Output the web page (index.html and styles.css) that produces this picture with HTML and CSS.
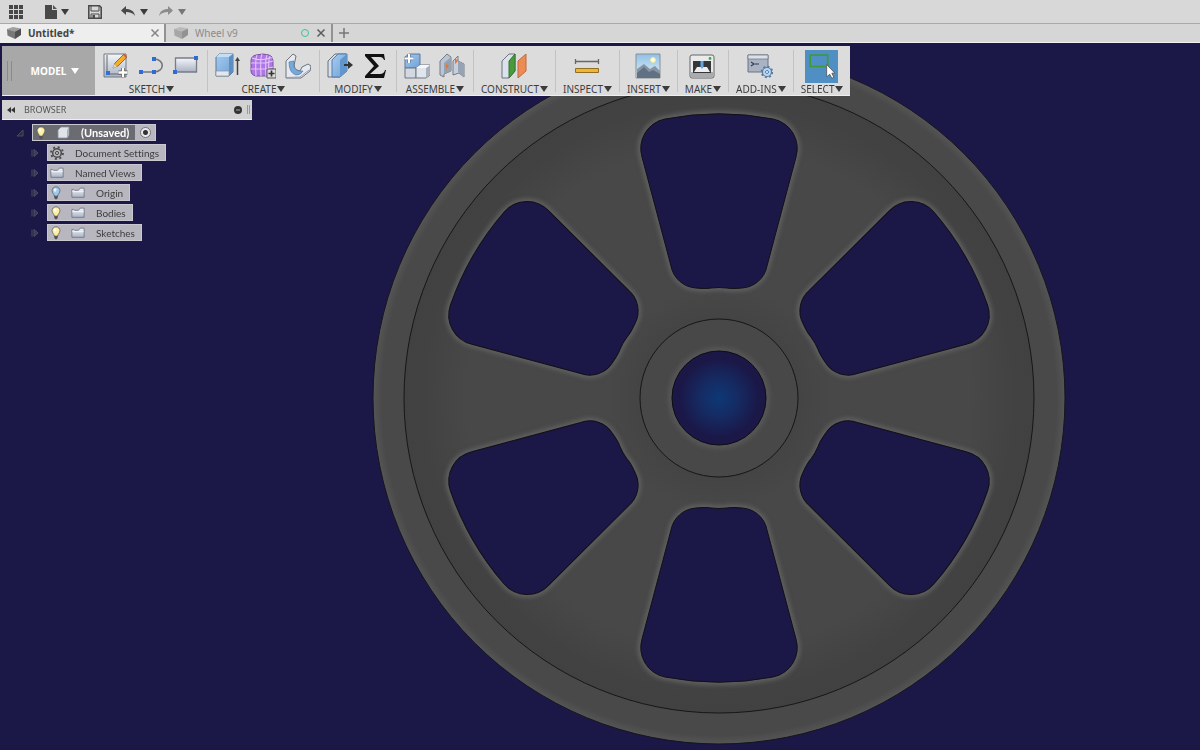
FILE: index.html
```
<!DOCTYPE html>
<html lang="en">
<head>
  <meta charset="UTF-8">
  <meta name="viewport" content="width=device-width, initial-scale=1.0">
  <title>Untitled*</title>
  <link rel="stylesheet" href="styles.css">
</head>
<body>
  <!-- shared icon parts -->
  <svg class="defs" width="0" height="0" aria-hidden="true">
    <defs>
      <linearGradient id="steel" x1="0" y1="0" x2="0" y2="1"><stop offset="0" stop-color="#f4f6fa"/><stop offset="1" stop-color="#a9b2c4"/></linearGradient>
      <linearGradient id="blue" x1="0" y1="0" x2="1" y2="1"><stop offset="0" stop-color="#a5cdf3"/><stop offset="1" stop-color="#6f9fd3"/></linearGradient>
      <linearGradient id="sky" x1="0" y1="0" x2="0" y2="1"><stop offset="0" stop-color="#8fc1e6"/><stop offset="1" stop-color="#e3f0f8"/></linearGradient>
      <symbol id="cube" viewBox="0 0 16 16">
        <path d="M1 4 7 2l8 1.500L9 6.500z" fill="#a0a0a0"/><path d="M1 4l8 2.500V14l-7.500-3.500z" fill="#787878"/><path d="M9 6.500l6-3V10l-6 4z" fill="#505050"/>
      </symbol>
      <symbol id="folder" viewBox="0 0 16 14">
        <path d="M1 12.500V3.500h2l1 1h4.500l2-2.500H15v10.500z" fill="url(#steel)" stroke="#5e6472" stroke-width=".8"/>
        <path d="M1.500 6h13" stroke="#fff" stroke-width=".8"/>
      </symbol>
      <symbol id="bulb" viewBox="0 0 12 16">
        <path d="M6 1C3.200 1 1.500 3 1.500 5.300 1.500 8 4 9 4 11.500h4C8 9 10.500 8 10.500 5.300 10.500 3 8.800 1 6 1z" fill="currentColor" stroke="#55524a" stroke-width=".8"/>
        <ellipse cx="5" cy="4.500" rx="1.600" ry="2" fill="#fff" opacity=".8"/>
        <path d="M4 11.500h4v2L7 15H5l-1-1.500z" fill="#555"/>
      </symbol>
      <symbol id="close" viewBox="0 0 10 10"><path d="M1.500 1.500l7 7M8.500 1.500l-7 7" stroke="currentColor" stroke-width="1.500"/></symbol>
      <symbol id="twist" viewBox="0 0 8 8"><path d="M1 .5v7M3 .5l4 3.500-4 3.500z" fill="#3a3852" stroke="#504e64" stroke-width="1"/></symbol>
    </defs>
  </svg>

  <header class="quickbar">
    <button class="icon-btn apps" aria-label="Data panel">
      <svg width="14" height="14" viewBox="0 0 14 14"><path d="M0 0h4v4H0zM5 0h4v4H5zM10 0h4v4h-4zM0 5h4v4H0zM5 5h4v4H5zM10 5h4v4h-4zM0 10h4v4H0zM5 10h4v4H5zM10 10h4v4h-4z" fill="#484848"/></svg>
    </button>
    <button class="icon-btn file" aria-label="File">
      <svg width="12" height="14" viewBox="0 0 12 14"><path d="M0 0h7v5h5v9H0z" fill="#484848"/><path d="M8 0l4 4H8z" fill="#555"/></svg>
      <i class="caret"></i>
    </button>
    <button class="icon-btn save" aria-label="Save">
      <svg width="14" height="14" viewBox="0 0 14 14"><path d="M.8.8h10.700l1.700 1.700v10.700H.8z" fill="none" stroke="#4a4a4a" stroke-width="1.600"/><path d="M3 1h8v5H3zM3 9h8v4H3z" fill="#d8d8d8" stroke="#4a4a4a"/><path d="M4.500 10h2.500v3H4.500z" fill="#4a4a4a"/></svg>
    </button>
    <button class="icon-btn undo" aria-label="Undo">
      <svg width="14" height="11" viewBox="0 0 14 11"><path d="M0 4.500 5 0v3c5 0 8 2 9 7-2-3-5-4-9-4v3z" fill="#484848"/></svg>
      <i class="caret"></i>
    </button>
    <button class="icon-btn redo" aria-label="Redo">
      <svg width="14" height="11" viewBox="0 0 14 11"><path d="M14 4.500 9 0v3C4 3 1 5 0 10c2-3 5-4 9-4v3z" fill="#8c8c8c"/></svg>
      <i class="caret dim"></i>
    </button>
  </header>

  <nav class="tabs" aria-label="Documents">
    <div class="tab active">
      <svg width="16" height="16"><use href="#cube"/></svg>
      <button class="tab-name">Untitled*</button>
      <button class="tab-close" aria-label="Close Untitled"><svg width="10" height="10"><use href="#close"/></svg></button>
    </div>
    <div class="tab">
      <svg class="faded" width="16" height="16"><use href="#cube"/></svg>
      <button class="tab-name">Wheel v9</button>
      <span class="sync"></span>
      <button class="tab-close dark" aria-label="Close Wheel v9"><svg width="10" height="10"><use href="#close"/></svg></button>
    </div>
    <button class="tab-add" aria-label="New design"><svg width="10" height="10" viewBox="0 0 10 10"><path d="M5 0v10M0 5h10" stroke="#777" stroke-width="1.500"/></svg></button>
  </nav>

  <main class="workspace">
    <svg class="viewport" viewBox="0 0 1200 707" preserveAspectRatio="xMidYMid slice" role="img" aria-label="Wheel, front view">
      <defs>
        <radialGradient id="face" gradientUnits="userSpaceOnUse" cx="0" cy="0" r="315">
          <stop offset=".25" stop-color="#444"/><stop offset=".36" stop-color="#484848"/>
          <stop offset=".8" stop-color="#484848"/><stop offset=".94" stop-color="#424242"/><stop offset="1" stop-color="#414141"/>
        </radialGradient>
        <radialGradient id="rim" gradientUnits="userSpaceOnUse" cx="0" cy="0" r="346">
          <stop offset=".975" stop-color="#494949"/><stop offset="1" stop-color="#555"/>
        </radialGradient>
        <radialGradient id="origin"><stop offset="0" stop-color="#0e3876"/><stop offset=".4" stop-color="#152b63"/><stop offset=".85" stop-color="#1b1747"/></radialGradient>
        <filter id="soft" x="-20%" y="-20%" width="140%" height="140%"><feGaussianBlur stdDeviation="2"/></filter>
        <path id="pocket" d="M-77-241A30 30 0 0 1-54-279A284 284 0 0 1 54-279A30 30 0 0 1 77-241L48-132A27 27 0 0 1 23-110Q12-109 8-110Q0-111-8-110Q-12-109-23-110A27 27 0 0 1-48-132Z"/>
        <g id="pockets">
          <use href="#pocket"/><use href="#pocket" transform="rotate(60)"/><use href="#pocket" transform="rotate(120)"/>
          <use href="#pocket" transform="rotate(180)"/><use href="#pocket" transform="rotate(240)"/><use href="#pocket" transform="rotate(300)"/>
        </g>
      </defs>
      <g transform="translate(719 355)">
        <circle r="346" fill="url(#rim)" stroke="#15151c"/>
        <circle r="315" fill="url(#face)" stroke="#161616"/>
        <use href="#pockets" fill="none" stroke="#606060" stroke-width="6" filter="url(#soft)"/>
        <use href="#pockets" fill="#1b1747" stroke="#101015"/>
        <circle r="79" fill="#484848" stroke="#161616"/>
        <circle r="48" fill="none" stroke="#585858" stroke-width="5" filter="url(#soft)"/>
        <circle r="47" fill="url(#origin)" stroke="#0d0d12"/>
      </g>
    </svg>

    <div class="panels">
      <div class="toolbar">
        <button class="mode"><span>MODEL</span><i class="caret light"></i></button>

        <div class="group">
          <div class="tools">
            <button aria-label="Create sketch"><svg viewBox="0 0 26 26"><path d="M1 1h22v23H1z" fill="url(#steel)" stroke="#737983"/><path d="M4 2v19h17" fill="none" stroke="#666"/><path d="M10 15l2-5 9-9 3 3-9 9z" fill="#f2ae2b" stroke="#7a5a23" stroke-width=".8"/><path d="M20 2l3 3 1-2-2-2z" fill="#cf6152"/><path d="M10 15l1-4 3 3z" fill="#e9d7b5"/><path d="M3 18h4v4H3z" fill="#2f6fd6"/><path d="M20 15v9M15.500 19.500h9" stroke="#555" stroke-width="4"/><path d="M20 15v9M15.500 19.500h9" stroke="#fff" stroke-width="2.400"/></svg></button>
            <button aria-label="Line"><svg viewBox="0 0 26 26"><path d="M3 19h13c11 0 11-13 0-13" fill="none" stroke="#73777f" stroke-width="1.600"/><path d="M1 17h4v4H1zM14 17h4v4h-4zM14 4h4v4h-4z" fill="#2e6bd3"/></svg></button>
            <button aria-label="Rectangle"><svg viewBox="0 0 26 26"><path d="M2.500 5h21v14h-21z" fill="url(#steel)" stroke="#777c85" stroke-width="1.300"/><path d="M0 17h4v4H0zM21 3h4v4h-4z" fill="#2e6bd3"/></svg></button>
          </div>
          <button class="menu">SKETCH<i class="caret"></i></button>
        </div>

        <div class="group">
          <div class="tools">
            <button aria-label="Extrude"><svg viewBox="0 0 26 26"><path d="M1 4l3-3h14v18l-4 4H1z" fill="url(#blue)" stroke="#5d7896"/><path d="M1 4h13l4-3H4z" fill="#c3dff8"/><path d="M14 4v19l4-4V1z" fill="#5e8dbf"/><path d="M1 18h13v5H1z" fill="#e2e6ed" stroke="#8a919e" stroke-width=".7"/><path d="M22.500 22V6" stroke="#444" stroke-width="1.500"/><path d="M20 8l2.500-4L25 8z" fill="#444"/></svg></button>
            <button aria-label="Create form"><svg viewBox="0 0 26 26"><path d="M1 8q0-5 5-6 7-2 13 0 4 1 4 6v10q-1 5-6 5H6q-5-1-5-5z" fill="#ae76e6" stroke="#79549c"/><path d="M2 5q8 3 14 1t7-1M1 10h15l7-2M1 16h15l7-2M7 2q-2 4-1 21M12 1q-2 4-1 22M17 2q-2 4-1 21M20 3q-2 4-1 17" fill="none" stroke="#e3c6fa" stroke-width="1.100"/><path d="M17 16h9v9h-9z" fill="#ddd" stroke="#555"/><path d="M21.500 17.500v6M18.500 20.500h6" stroke="#333" stroke-width="1.700"/></svg></button>
            <button aria-label="Sweep"><svg viewBox="0 0 26 26"><path d="M1 8l7-7 3 2-1 5q-3 9 5 10l2-4 6-3 3 2-1 5-9 7H1z" fill="#e6eaf0" stroke="#6c737e"/><path d="M4 9q4-1 5-1-2 8 5 10l4 0q-2 4-7 4-7-2-7-13z" fill="#76a9db" stroke="#557ba5" stroke-width=".7"/><path d="M2 24.500l13-.5 9-7" fill="none" stroke="#9aa2ae"/></svg></button>
          </div>
          <button class="menu">CREATE<i class="caret"></i></button>
        </div>

        <div class="group">
          <div class="tools">
            <button aria-label="Press pull"><svg viewBox="0 0 26 26"><path d="M1 8l7-7h11v17l-6 6H1z" fill="#d7dfea" stroke="#68717e"/><path d="M5 7l6-6h9v17l-7 6H5z" fill="url(#blue)" stroke="#547da9"/><path d="M13 7l7-6v17l-7 6z" fill="#6295cb"/><path d="M17 11h4V8l5 4-5 4v-3h-4z" fill="#333"/></svg></button>
            <button aria-label="Change parameters"><svg viewBox="0 0 26 26"><path d="M3 1h19l1 6h-1q-1-3-4-3H9l8 9-9 8h10q4 0 5-4h1l-2 8H3v-2l9-10L3 3z" fill="#111"/></svg></button>
          </div>
          <button class="menu">MODIFY<i class="caret"></i></button>
        </div>

        <div class="group">
          <div class="tools">
            <button aria-label="New component"><svg viewBox="0 0 26 26"><path d="M1 4l4-3h11v11l-4 3H1z" fill="url(#blue)" stroke="#5d7896"/><path d="M1 15h11v10H1z" fill="#d3d9e2" stroke="#6f7783"/><path d="M12 15l4-3h10v10l-4 3H12z" fill="#e0e4eb" stroke="#6f7783"/><path d="M22 15v10l4-3V12z" fill="#a8afbb"/><path d="M12 15h10l4-3H16z" fill="#f4f6fa"/><path d="M5 1v9M.5 5.500h9" stroke="#657d98" stroke-width="3.500"/><path d="M5 1v9M.5 5.500h9" stroke="#fff" stroke-width="2"/></svg></button>
            <button aria-label="Joint"><svg viewBox="0 0 26 26"><path d="M1 8l7-7 4 3v14l-7 3v3l-4-2z" fill="#bac4d2" stroke="#747d89"/><path d="M5 10l7-6v14l-7 3z" fill="#93a1b3"/><path d="M14 8l5-5v5l6 3v13l-5-4-6 2z" fill="#c6cfdb" stroke="#747d89"/><path d="M19 8l6 3v13l-6-5z" fill="#95a3b5"/><path d="M7 11l3 2-3 3zM16 5l3 3-3 3z" fill="#e8752d"/></svg></button>
          </div>
          <button class="menu">ASSEMBLE<i class="caret"></i></button>
        </div>

        <div class="group">
          <div class="tools">
            <button aria-label="Offset plane"><svg viewBox="0 0 26 26"><path d="M1 8l7-7h6v17l-6 7H1z" fill="#dce2eb" stroke="#6d7580"/><path d="M8 8l6-7v17l-6 7z" fill="#479b3b" stroke="#3a7232"/><path d="M17 8l8-7v17l-8 7z" fill="#ee8b55" stroke="#bc6b42"/></svg></button>
          </div>
          <button class="menu">CONSTRUCT<i class="caret"></i></button>
        </div>

        <div class="group">
          <div class="tools">
            <button aria-label="Measure"><svg viewBox="0 0 26 26"><path d="M1.500 6v5M24.500 6v5M2 8.500h22" stroke="#666" stroke-width="1.300"/><path d="M1.500 15.500h23v4h-23z" fill="#f1b62e" stroke="#8f6e28"/></svg></button>
          </div>
          <button class="menu">INSPECT<i class="caret"></i></button>
        </div>

        <div class="group">
          <div class="tools">
            <button aria-label="Insert canvas"><svg viewBox="0 0 26 26"><path d="M1 1h24v24H1z" fill="url(#sky)" stroke="#8a8f95"/><circle cx="18" cy="7" r="2.500" fill="#fffde2" stroke="#f1e59b"/><path d="M2 16l7-5 6 5 5-3 5 5v7H2z" fill="#8694a3"/><path d="M2 20l7-6 5 5 4-2 7 4v4H2z" fill="#607183"/></svg></button>
          </div>
          <button class="menu">INSERT<i class="caret"></i></button>
        </div>

        <div class="group">
          <div class="tools">
            <button aria-label="3D print"><svg viewBox="0 0 26 26"><rect x="1" y="2" width="24" height="23" rx="2" fill="#e9eaec" stroke="#666"/><path d="M1.500 19h23v4q0 1-2 1h-19q-2 0-2-1z" fill="#a9abaf"/><path d="M4 8h18v12H4z" fill="#353638"/><path d="M8 14h10l3 5H5z" fill="#eee"/><path d="M11.500 8h3v6l-1.500 2-1.500-2z" fill="#64a7df"/><circle cx="21" cy="5.500" r="1.400" fill="#35ad42"/></svg></button>
          </div>
          <button class="menu">MAKE<i class="caret"></i></button>
        </div>

        <div class="group">
          <div class="tools">
            <button aria-label="Scripts and add-ins"><svg viewBox="0 0 26 26"><path d="M1 2h20v17H1z" fill="#a9b3c4" stroke="#6b7380"/><path d="M1 2h20v4H1z" fill="#dce0e8" stroke="#6b7380" stroke-width=".7"/><path d="M4 9l3 2-3 2M8 11h4" fill="none" stroke="#333d50" stroke-width="1.200"/><circle cx="20" cy="19" r="4.500" fill="#bad7f2" stroke="#5379a5" stroke-width="1.200"/><circle cx="20" cy="19" r="5.500" fill="none" stroke="#5379a5" stroke-width="1.600" stroke-dasharray="2 2.300"/><circle cx="20" cy="19" r="1.500" fill="#fff" stroke="#5379a5"/></svg></button>
          </div>
          <button class="menu">ADD-INS<i class="caret"></i></button>
        </div>

        <div class="group">
          <div class="tools">
            <button class="selected" aria-label="Select"><svg viewBox="0 0 32 32"><path d="M5 5h17v11H5z" fill="none" stroke="#3f9b37" stroke-width="1.600"/><path d="M21 14v12l3-2.500 2 4 2-1-2-4h3z" fill="#fff" stroke="#555" stroke-width=".8"/></svg></button>
          </div>
          <button class="menu">SELECT<i class="caret"></i></button>
        </div>
      </div>

      <section class="browser">
        <div class="browser-head">
          <button aria-label="Collapse browser"><svg width="8" height="6" viewBox="0 0 8 6"><path d="M4 0v6L0 3zM8 0v6L4 3z" fill="#333"/></svg></button>
          <h2>BROWSER</h2>
          <button aria-label="Minimize browser"><svg width="8" height="8" viewBox="0 0 8 8"><circle cx="4" cy="4" r="4" fill="#333"/><path d="M2 4h4" stroke="#aaa"/></svg></button>
          <i class="grip"></i>
        </div>

        <ul class="tree">
          <li class="root">
            <button class="twist" aria-label="Collapse"><svg width="8" height="8" viewBox="0 0 8 8"><path d="M7 1v6H1z" fill="#2c2a3c" stroke="#4c4a5c"/></svg></button>
            <div class="node">
              <svg class="bulb" width="12" height="14"><use href="#bulb"/></svg>
              <svg width="14" height="13" viewBox="0 0 14 13"><path d="M2 4l3-3h8v8l-2 3H2z" fill="#dfe3ea" stroke="#888f9b" stroke-width=".8"/><path d="M11 4v8l2-3V1z" fill="#aab2c0"/></svg>
              <span>(Unsaved)</span>
              <label class="activate"><input type="radio" name="component" aria-label="Activate component" checked></label>
            </div>
          </li>
          <li>
            <button class="twist" aria-label="Expand"><svg width="8" height="8"><use href="#twist"/></svg></button>
            <div class="node">
              <svg width="14" height="14" viewBox="0 0 14 14"><circle cx="7" cy="7" r="4.300" fill="none" stroke="#4a4a4a" stroke-width="1.500"/><circle cx="7" cy="7" r="6" fill="none" stroke="#4a4a4a" stroke-width="1.800" stroke-dasharray="2 2.710"/><circle cx="7" cy="7" r="1.600" fill="none" stroke="#4a4a4a"/></svg>
              <span>Document Settings</span>
            </div>
          </li>
          <li>
            <button class="twist" aria-label="Expand"><svg width="8" height="8"><use href="#twist"/></svg></button>
            <div class="node">
              <svg width="14" height="13"><use href="#folder"/></svg>
              <span>Named Views</span>
            </div>
          </li>
          <li>
            <button class="twist" aria-label="Expand"><svg width="8" height="8"><use href="#twist"/></svg></button>
            <div class="node">
              <svg class="bulb off" width="12" height="14"><use href="#bulb"/></svg>
              <svg width="14" height="13"><use href="#folder"/></svg>
              <span>Origin</span>
            </div>
          </li>
          <li>
            <button class="twist" aria-label="Expand"><svg width="8" height="8"><use href="#twist"/></svg></button>
            <div class="node">
              <svg class="bulb" width="12" height="14"><use href="#bulb"/></svg>
              <svg width="14" height="13"><use href="#folder"/></svg>
              <span>Bodies</span>
            </div>
          </li>
          <li>
            <button class="twist" aria-label="Expand"><svg width="8" height="8"><use href="#twist"/></svg></button>
            <div class="node">
              <svg class="bulb" width="12" height="14"><use href="#bulb"/></svg>
              <svg width="14" height="13"><use href="#folder"/></svg>
              <span>Sketches</span>
            </div>
          </li>
        </ul>
      </section>
    </div>
  </main>
</body>
</html>
```
FILE: styles.css
```
* {
  box-sizing: border-box;
}
body {
  margin: 0;
  height: 100vh;
  display: flex;
  flex-direction: column;
  overflow: hidden;
  font-family: "Noto Sans", "Open Sans", sans-serif;
  font-size: 10px;
  line-height: 12px;
  color: #3c3c3c;
  background: #1b1747;
}
button {
  margin: 0;
  padding: 0;
  border: 0;
  background: none;
  font: inherit;
  color: inherit;
  display: flex;
  align-items: center;
  cursor: pointer;
}
svg {
  display: block;
  flex: none;
}
.defs {
  position: absolute;
}
.caret {
  border: 4px solid transparent;
  border-top: 6px solid #3c3c3c;
  border-bottom: 0;
}
.caret.dim {
  border-top-color: #777;
}
.caret.light {
  border-top-color: #fff;
}

/* top bar */
.quickbar {
  flex: none;
  display: flex;
  align-items: center;
  gap: 18px;
  height: 24px;
  padding-left: 9px;
  background: #d8d8d8;
  border-bottom: 1px solid #a9a9a9;
}
.icon-btn {
  gap: 5px;
}
.apps,
.file {
  margin-right: 4px;
}
.file {
  gap: 4px;
}
.save {
  margin: 0 1px 0 -3px;
}
.redo {
  margin-left: -7px;
}

/* document tabs */
.tabs {
  flex: none;
  display: flex;
  height: 19px;
  background: #d6d6d6;
  border-bottom: 1px solid #f0f0f0;
}
.tab {
  display: flex;
  align-items: center;
  width: 167px;
  padding: 0 5px 0 7px;
  border-right: 2px solid #929292;
  color: #8b8b8b;
}
.tab.active {
  width: 166px;
  padding: 0 4px 0 6px;
  background: #eee;
  color: #444;
  font-weight: bold;
}
.tab-name {
  flex: 1;
  padding-left: 6px;
}
.tab-close {
  color: #858585;
}
.tab-close.dark {
  color: #5c5c5c;
}
.faded {
  opacity: 0.5;
}
.sync {
  width: 8px;
  height: 8px;
  margin-right: 7px;
  border: 1px solid #3fc2a0;
  border-radius: 50%;
}
.tab-add {
  padding: 0 6px;
}

/* modelling area */
.workspace {
  position: relative;
  flex: 1;
  min-height: 0;
}
.viewport {
  position: absolute;
  inset: 0;
  width: 100%;
  height: 100%;
}
.panels {
  position: relative;
  display: flex;
  flex-direction: column;
  align-items: flex-start;
  gap: 4px;
  padding: 3px 2px;
}
.toolbar {
  display: flex;
  height: 50px;
  background: #dcdcdc;
  border-bottom: 1px solid #efefef;
}
.mode {
  justify-content: center;
  gap: 5px;
  width: 93px;
  padding-left: 13px;
  background:
    linear-gradient(#8a8a8a, #8a8a8a) 5px 50% / 1px 20px no-repeat,
    linear-gradient(#8a8a8a, #8a8a8a) 9px 50% / 1px 20px no-repeat,
    #a8a8a8;
  color: #fff;
  font-weight: bold;
}
.group {
  display: flex;
  flex-direction: column;
  align-items: center;
  gap: 1px;
  padding: 4px 7px 0 8px;
}
.group + .group {
  background: linear-gradient(#c2c2c2, #c2c2c2) 0 50% / 1px 42px no-repeat;
}
.tools {
  display: flex;
  align-items: center;
  gap: 9px;
  height: 32px;
  padding-right: 1px;
}
.tools svg {
  width: 26px;
  height: 26px;
}
.tools .selected {
  background: #4f8fc4;
}
.tools .selected svg {
  width: 33px;
  height: 33px;
}
.menu {
  gap: 1px;
}

/* browser panel */
.browser {
  width: 250px;
}
.browser-head {
  display: flex;
  align-items: center;
  height: 20px;
  padding: 0 2px 0 5px;
  background: #d2d2d2;
  border-bottom: 1px solid #efefef;
}
.browser-head h2 {
  flex: 1;
  margin: 0 0 0 9px;
  font-size: 9px;
  font-weight: normal;
  color: #555;
}
.grip {
  width: 3px;
  height: 9px;
  margin-left: 5px;
  border: 1px solid #999;
  border-width: 0 1px;
}
.tree {
  display: flex;
  flex-direction: column;
  gap: 3px;
  margin: 4px 0 0;
  padding: 0;
  list-style: none;
  font-family: Lato, "Noto Sans", sans-serif;
  font-variant-ligatures: none;
}
.tree li {
  display: flex;
  align-items: center;
  gap: 8px;
  height: 17px;
  padding-left: 29px;
}
.tree .root {
  padding-left: 14px;
}
.node {
  display: flex;
  align-items: center;
  gap: 9px;
  height: 17px;
  padding: 0 6px 0 2px;
  background: #b8b7c0;
  border: 1px solid #c9c8d0;
}
.node span {
  padding-left: 2px;
}
.root .node {
  padding: 0 0 0 2px;
  background: #6b6b72;
  color: #fff;
  font-size: 11px;
  font-weight: bold;
}
.bulb {
  color: #fdf0a4;
}
.bulb.off {
  color: #9ccbf2;
}
.activate {
  display: flex;
  align-items: center;
  justify-content: center;
  width: 20px;
  height: 15px;
  margin-left: -3px;
  background: #b8b7c0;
}
.activate input {
  appearance: none;
  width: 11px;
  height: 11px;
  margin: 0;
  border: 1px solid #777;
  border-radius: 50%;
  background: radial-gradient(circle, #333 2px, #e8e8ee 3px);
}
```
